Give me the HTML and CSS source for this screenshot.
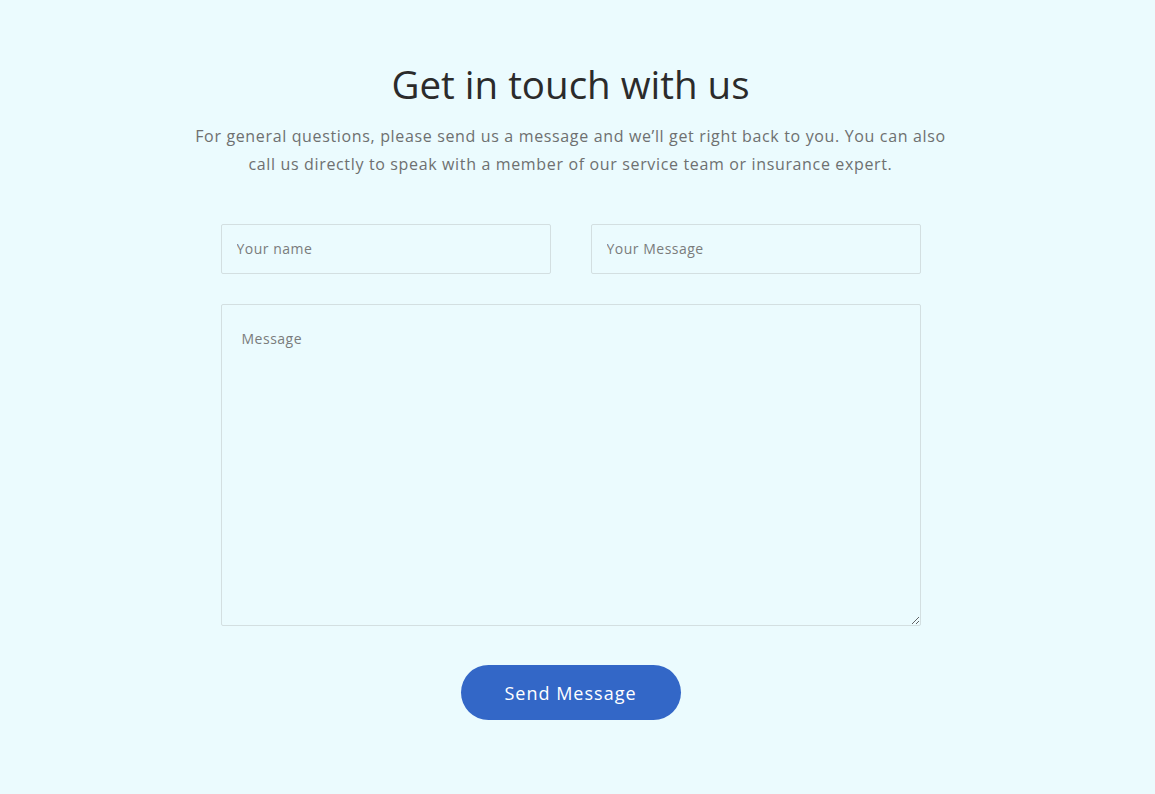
FILE: index.html
```html
<!DOCTYPE html>
<html lang="en">
<head>
<meta charset="utf-8">
<title>Contact</title>
<link rel="stylesheet" href="styles.css">
</head>
<body>
<main class="page">
  <section class="contact">
    <h1 class="contact-title">Get in touch with us</h1>
    <p class="contact-lead">For general questions, please send us a message and we’ll get right back to you. You can also call us directly to speak with a member of our service team or insurance expert.</p>
    <form class="contact-form">
      <div class="form-row">
        <input class="field" type="text" placeholder="Your name">
        <input class="field" type="text" placeholder="Your Message">
      </div>
      <textarea class="field field-area" placeholder="Message"></textarea>
      <div class="form-actions">
        <button class="btn-send" type="button">Send Message</button>
      </div>
    </form>
  </section>
</main>
</body>
</html>
```

FILE: styles.css
```css
* { box-sizing: border-box; }
html, body {
  margin: 0;
  padding: 0;
  background: #ebfbfe;
}
body {
  font-family: "Open Sans", "Noto Sans", sans-serif;
  color: #2e2e2e;
  height: 794px;
  overflow: hidden;
}
.page {
  padding-right: 14px;
}
.contact {
  display: flex;
  flex-direction: column;
  align-items: center;
  padding-top: 60px;
}
.contact-title {
  margin: 0;
  font-size: 38.5px;
  line-height: 48px;
  font-weight: 500;
  color: #2b2b2b;
}
.contact-lead {
  margin: 14px 0 0;
  width: 760px;
  text-align: center;
  font-size: 16px;
  line-height: 28px;
  letter-spacing: 0.65px;
  color: #6e7070;
}
.contact-form {
  width: 700px;
  margin-top: 46px;
  display: flex;
  flex-direction: column;
  gap: 30px;
}
.form-row {
  display: grid;
  grid-template-columns: 1fr 1fr;
  gap: 40px;
}
.field {
  display: block;
  width: 100%;
  height: 50px;
  padding: 0 15px 2px;
  border: 1px solid #d3dfe1;
  border-radius: 2px;
  background: transparent;
  font-family: inherit;
  font-size: 14px;
  letter-spacing: 0.5px;
  color: #333;
  outline: none;
}
.field::placeholder {
  color: #7a7c7c;
}
.field-area {
  height: 322px;
  padding: 23px 20px;
  resize: vertical;
  line-height: 22px;
}
.form-actions {
  display: flex;
  justify-content: center;
  margin-top: 9px;
}
.btn-send {
  width: 220px;
  height: 55px;
  border: none;
  border-radius: 28px;
  background: #3367c7;
  color: #fff;
  font-family: inherit;
  font-size: 18px;
  letter-spacing: 1px;
  cursor: pointer;
}
```
